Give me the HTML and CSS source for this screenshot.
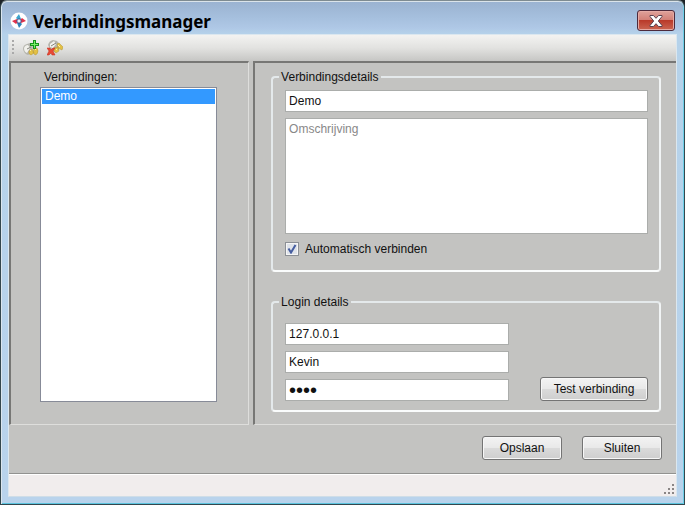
FILE: index.html
```html
<!DOCTYPE html>
<html lang="nl">

<head>
    <meta charset="UTF-8">
    <title>Verbindingsmanager</title>
    <link rel="stylesheet" href="styles.css">
</head>

<body>
    <div class="window">
        <header class="titlebar">
            <svg class="logo" viewBox="0 0 18 18" aria-hidden="true">
                <circle cx="9" cy="9" r="8.500" fill="#fff" />
                <path d="M9 2 L11 7 L9 9 L6 6z" fill="#3da4cc" />
                <path d="M16 9 L11 11 L9 9 L12 6z" fill="#e0324c" />
                <path d="M9 16 L7 11 L9 9 L12 12z" fill="#2c82b9" />
                <path d="M2 9 L7 7 L9 9 L6 12z" fill="#e0324c" />
                <path d="M9 6 L12 9 L9 12 L6 9z" fill="#3d5590" />
                <path d="M9 7 L11 9 L9 11 L7 9z" fill="#eef4fa" />
            </svg>
            <h1 class="title">Verbindingsmanager</h1>
            <button type="button" class="close" aria-label="Sluit venster">
                <svg viewBox="0 0 16 14" width="16" height="14">
                    <path d="M2 1.500h3.500L8 4.300l2.500-2.800H14v1L10.300 7l3.700 4.500v1h-3.500L8 9.700l-2.500 2.800H2v-1L5.700 7 2 2.500z" fill="#fff" stroke="#5a4250" stroke-width="1" />
                </svg>
            </button>
        </header>

        <div class="client">
            <div class="toolbar">
                <span class="grip"></span>
                <button type="button" class="tool" aria-label="Verbinding toevoegen">
                    <svg viewBox="0 0 16 16" width="16" height="16">
                        <path d="M0 9Q0 5 4 4l3-1 3 4-1 6-4 2Q1 14 0 9z" fill="#b5b5ad" />
                        <path d="M1 8Q2 5 5 5l2 3-3 5Q1 12 1 8z" fill="#f1f1ec" />
                        <path d="M4 9l4-2" stroke="#85857c" />
                        <path d="M6 11l3-2 2 4-3 2q-3-1-2-4zM11 9l3-1q2 3 0 6l-2 1-2-3z" fill="#e3c044" stroke="#b09438" stroke-width=".5" />
                        <path d="M7 11l1-1M12 10l1-1" stroke="#fff3a0" />
                        <path d="M10 0h3v3h3v3h-3v3h-3V6H7V3h3z" fill="#15941c" />
                        <path d="M11.500 1v7M8 4.500h7" stroke="#79ee68" stroke-width="1" />
                    </svg>
                </button>
                <button type="button" class="tool" aria-label="Verbinding verwijderen">
                    <svg viewBox="0 0 16 16" width="16" height="16">
                        <path d="M1 5Q2 1 6 0l4 1 3 4-1 5-5 2-4-3z" fill="#b5b5ad" />
                        <path d="M3 4l4-3 2 3-3 4-3-1z" fill="#f3f3ee" />
                        <path d="M4 6l5-3" stroke="#85857c" />
                        <path d="M10 4l2-1 4 4-1 3-4-2zM7 8l4-1 1 4-3 2-2-2z" fill="#e3c044" stroke="#b09438" stroke-width=".5" />
                        <path d="M11 5l2 2M9 9l1 1" stroke="#fff3a0" />
                        <path d="M0 8h3l1 2 2-2h2l-2 3 2 4H5l-1-2-2 2H0l2-4z" fill="#e84a34" stroke="#c22a1c" stroke-width=".5" />
                    </svg>
                </button>
            </div>

            <main class="panels">
                <section class="panel panel-list">
                    <label class="list-label" for="connections">Verbindingen:</label>
                    <select id="connections" class="list" size="4">
                        <option class="list-item" selected>Demo</option>
                    </select>
                </section>

                <form class="panel panel-form" id="details">
                    <fieldset class="group group-details">
                        <legend>Verbindingsdetails</legend>
                        <input type="text" class="field" value="Demo" aria-label="Naam">
                        <textarea class="field description" placeholder="Omschrijving" aria-label="Omschrijving"></textarea>
                        <label class="check">
                            <input type="checkbox" class="check-box" checked>
                            Automatisch verbinden
                        </label>
                    </fieldset>
                    <fieldset class="group group-login">
                        <legend>Login details</legend>
                        <div class="login-fields">
                            <input type="text" class="field" value="127.0.0.1" aria-label="Server">
                            <input type="text" class="field" value="Kevin" aria-label="Gebruikersnaam">
                            <input type="password" class="field password" value="demo" aria-label="Wachtwoord">
                        </div>
                        <button type="button" class="btn btn-test">Test verbinding</button>
                    </fieldset>
                </form>
            </main>

            <div class="actions">
                <button type="submit" form="details" class="btn">Opslaan</button>
                <button type="button" class="btn">Sluiten</button>
            </div>

            <footer class="statusbar">
                <svg class="resize" viewBox="0 0 12 12" width="12" height="12" aria-hidden="true">
                    <path d="M9 1h2v2H9zM9 5h2v2H9zM5 5h2v2H5zM9 9h2v2H9zM5 9h2v2H5zM1 9h2v2H1z" fill="#8a8585" />
                </svg>
            </footer>
        </div>
    </div>
</body>

</html>
```

FILE: styles.css
```css
* {
    box-sizing: border-box;
}

body {
    margin: 0;
    background: #1d2226;
    color: #111;
    font: 12px/14px "Liberation Sans", Arial, sans-serif;
}

input,
textarea,
select,
button {
    font: inherit;
    color: inherit;
}

/* window frame */
.window {
    display: flex;
    flex-direction: column;
    min-height: 100vh;
    padding: 0 7px 7px;
    border: 1px solid #34474e;
    border-top: 1px solid #7e8b91;
    border-radius: 7px 7px 0 0;
    background: linear-gradient(#9ab2d0, #a5bfdd 16px, #afc8e6 27px, #b5d2ea 33px, #b9d3ec);
    box-shadow: inset 0 1px #dbe4ea, inset 1px 0 #dbe6ef, inset -1px 0 #6ccfe8, inset 0 -1px #5cc4de;
}

.titlebar {
    display: flex;
    align-items: center;
    height: 33px;
    padding: 6px 2px 0;
}

.logo {
    width: 18px;
    height: 18px;
}

.title {
    flex: 1;
    margin: 0 0 0 5px;
    padding-top: 2px;
    font: bold 17px/24px "Noto Sans", "Open Sans", sans-serif;
    color: #000;
}

.close {
    display: flex;
    align-items: center;
    justify-content: center;
    width: 38px;
    height: 21px;
    padding: 0;
    border: 1px solid #4d2a3c;
    border-radius: 3px;
    background: linear-gradient(#dfa29b, #d27f76 48%, #b93a2a 50%, #cb6552);
    box-shadow: inset 0 0 0 1px #e5aaa4;
}

.client {
    flex: 1;
    display: flex;
    flex-direction: column;
    border: 1px solid #dbe7ef;
    border-bottom-color: #cfdde7;
    background: #c3c3c1;
}

/* toolbar */
.toolbar {
    display: flex;
    align-items: center;
    height: 26px;
    padding-left: 3px;
    background: linear-gradient(#f3f3f1, #e2e2e0 50%, #c6c6c4);
}

.grip {
    width: 2px;
    height: 16px;
    margin-right: 9px;
    background: repeating-linear-gradient(#aaa 0 2px, transparent 2px 4px);
}

.tool {
    height: 16px;
    margin-right: 8px;
    padding: 0;
    border: 0;
    background: none;
}

/* panels */
.panels {
    flex: 1;
    display: flex;
    gap: 4px;
}

.panel {
    display: flex;
    flex-direction: column;
    border: 2px solid #777775;
    border-right: 1px solid #dededc;
    border-bottom: 1px solid #dededc;
}

.panel-list {
    flex: 0 0 36%;
    padding: 7px 31px 22px 29px;
}

.list-label {
    padding-left: 4px;
    line-height: 14px;
}

.list {
    flex: 1;
    margin-top: 3px;
    padding: 1px;
    border: 1px solid #878b98;
    border-radius: 0;
    background: #fff;
    outline: 0;
}

.list-item {
    min-height: 15px;
    padding: 0 3px;
    line-height: 15px;
}

.list-item:checked {
    background: #3399ff linear-gradient(#3399ff, #3399ff);
    color: #fff;
}

.panel-form {
    flex: 1;
    gap: 23px;
    padding: 7px 15px 12px 16px;
    border-right: 0;
}

.group {
    min-width: 0;
    margin: 0;
    border: 2px solid #e4e9eb;
    border-right-color: #f1f4f5;
    border-bottom-color: #fafcfc;
    border-radius: 4px;
}

.group legend {
    margin-left: -6px;
    padding: 0 2px;
}

.group-details {
    flex: 1;
    display: flex;
    flex-direction: column;
    gap: 6px;
    padding: 6px 11px 14px 12px;
}

.field {
    width: 100%;
    height: 22px;
    padding: 0 3px;
    border: 1px solid #abadab;
    border-radius: 0;
    background: #fff;
    outline: 0;
}

.description {
    flex: 1;
    display: block;
    padding: 3px;
    resize: none;
}

.field::placeholder {
    color: #888;
}

.password {
    font-size: 20px;
}

.check {
    display: flex;
    align-items: center;
    align-self: flex-start;
    gap: 6px;
    margin-top: 2px;
}

.check-box {
    appearance: none;
    width: 14px;
    height: 14px;
    margin: 0;
    border: 1px solid #8c9096;
    background: #dfe3ea;
    box-shadow: inset 0 0 0 1px #f6f6f6;
}

.check-box:checked {
    background: #dfe3ea url("data:image/svg+xml,%3Csvg xmlns='http://www.w3.org/2000/svg' viewBox='0 0 12 12'%3E%3Cpath d='M2.500 5.500l2.500 4L9.500 2' fill='none' stroke='%23465ea0' stroke-width='2'/%3E%3C/svg%3E");
}

.group-login {
    display: flex;
    align-items: flex-end;
    justify-content: space-between;
    padding: 14px 11px 9px 12px;
}

.login-fields {
    flex: 0 1 224px;
    display: flex;
    flex-direction: column;
    gap: 6px;
}

.btn {
    width: 80px;
    height: 24px;
    padding: 0;
    border: 1px solid #747474;
    border-radius: 3px;
    background: linear-gradient(#f3f3f3, #e9e9e9 48%, #dadada 52%, #cecece);
    box-shadow: inset 0 0 0 1px #f7f7f7;
}

.btn-test {
    width: 108px;
}

.actions {
    display: flex;
    justify-content: flex-end;
    gap: 20px;
    padding: 11px 14px 13px;
}

.statusbar {
    display: flex;
    align-items: flex-end;
    justify-content: flex-end;
    height: 23px;
    padding: 0 1px 1px;
    border-top: 1px solid #929290;
    background: #f1eded;
    box-shadow: inset 0 1px #fff;
}
```
